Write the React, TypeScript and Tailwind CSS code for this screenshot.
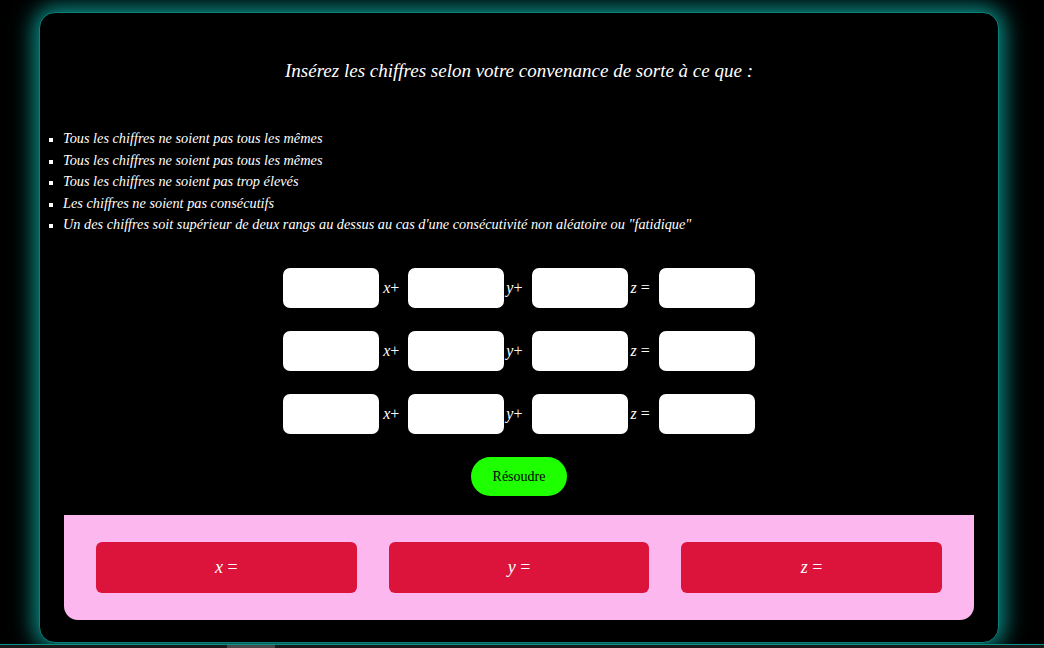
const rules = [
  "Tous les chiffres ne soient pas tous les mêmes",
  "Tous les chiffres ne soient pas tous les mêmes",
  "Tous les chiffres ne soient pas trop élevés",
  "Les chiffres ne soient pas consécutifs",
  'Un des chiffres soit supérieur de deux rangs au dessus au cas d\'une consécutivité non aléatoire ou "fatidique"',
];

const serif = "font-['Liberation_Serif','Times_New_Roman',serif]";

const Box = () => (
  <input type="text" className="w-[96px] h-[40px] rounded-[7px] bg-white border-0 outline-none" />
);

const EquationRow = () => (
  <div className="flex flex-row items-center">
    <Box />
    <span className="ml-[4px] mr-[9px] text-[16px] text-white">
      <i>x</i>+
    </span>
    <Box />
    <span className="ml-[2px] mr-[9px] text-[16px] text-white">
      <i>y</i>+
    </span>
    <Box />
    <span className="ml-[3px] mr-[9px] text-[16px] text-white">
      <i>z</i> =
    </span>
    <Box />
  </div>
);

export default function App() {
  return (
    <div className={`h-[648px] w-[1044px] overflow-hidden bg-black flex flex-col ${serif}`}>
      <div className="mt-[12px] ml-[39px] w-[960px] h-[631px] shrink-0 rounded-[16px] bg-black border border-[#0a7e79] shadow-[0_0_22px_5px_#0a938c] flex flex-col">
        {/* titre */}
        <h2 className="mt-[46px] text-center text-[19px] leading-[24px] italic text-white">
          Insérez les chiffres selon votre convenance de sorte à ce que :
        </h2>

        {/* règles */}
        <ul className="mt-[45px] pl-[23px] text-[14.3px] leading-[21.5px] italic text-white [list-style-type:square] [list-style-position:outside]">
          {rules.map((r, i) => (
            <li key={i} className="marker:text-[12px]">
              {r}
            </li>
          ))}
        </ul>

        {/* équations */}
        <div className="mt-[32px] flex flex-col items-center gap-[23px]">
          <EquationRow />
          <EquationRow />
          <EquationRow />
        </div>

        <div className="mt-[23px] flex justify-center">
          <button className="w-[96px] h-[39px] rounded-full bg-[#1eff00] text-black text-[14px]">
            Résoudre
          </button>
        </div>

        {/* résultats */}
        <div className="mt-[19px] mx-[24px] h-[105px] bg-[#fcb7ee] rounded-b-[14px] flex flex-row items-center gap-[32px] px-[32px]">
          {["x", "y", "z"].map((v) => (
            <div
              key={v}
              className="flex-1 h-[51px] rounded-[6px] bg-[#dc143c] flex items-center justify-center text-white text-[18px]"
            >
              <i>{v}</i>&nbsp;=
            </div>
          ))}
        </div>
      </div>
      <div className="mt-[1px] h-[1px] bg-[#0a8f89] shrink-0" />
      <div className="h-[3px] bg-[#1a1a1a] shrink-0 flex">
        <div className="ml-[227px] w-[48px] bg-[#4a4a4a]" />
      </div>
    </div>
  );
}
